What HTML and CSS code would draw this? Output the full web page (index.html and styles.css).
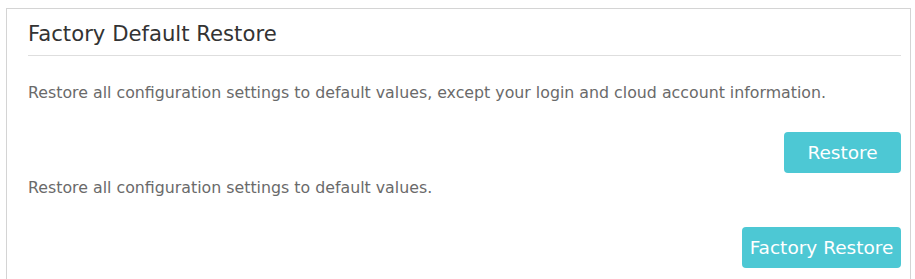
FILE: index.html
```html
<!DOCTYPE html>
<html>
<head>
<meta charset="utf-8">
<link rel="stylesheet" href="styles.css">
</head>
<body>
<section class="panel">
  <h2 class="title">Factory Default Restore</h2>
  <p class="desc first">Restore all configuration settings to default values, except your login and cloud account information.</p>
  <div class="actions"><button class="btn btn-restore">Restore</button></div>
  <p class="desc second">Restore all configuration settings to default values.</p>
  <div class="actions"><button class="btn btn-factory">Factory Restore</button></div>
</section>
</body>
</html>
```
FILE: styles.css
```css
html, body {
  margin: 0;
  padding: 0;
  background: #ffffff;
}
body {
  font-family: "DejaVu Sans", Verdana, sans-serif;
}
.panel {
  margin: 8px 4px 0 6px;
  border: 1px solid #d4d4d4;
  border-bottom: none;
  padding: 12px 9px 0 21px;
  height: 271px;
  box-sizing: border-box;
  overflow: hidden;
}
.title {
  margin: 0;
  font-size: 21.2px;
  line-height: 26px;
  font-weight: normal;
  color: #333333;
  padding-bottom: 8px;
  border-bottom: 1px solid #dedede;
}
.desc {
  margin: 0;
  font-size: 15.8px;
  line-height: 20px;
  color: #6a6a6a;
}
.desc.first {
  margin-top: 27px;
}
.desc.second {
  margin-top: 5px;
}
.actions {
  display: flex;
  justify-content: flex-end;
  margin-top: 29px;
}
.btn {
  height: 41px;
  border: none;
  border-radius: 4px;
  background: #4dc8d4;
  color: #ffffff;
  font-family: "DejaVu Sans", Verdana, sans-serif;
  font-size: 18.5px;
  padding: 0;
}
.btn-restore {
  width: 117px;
}
.btn-factory {
  width: 159px;
}
```
